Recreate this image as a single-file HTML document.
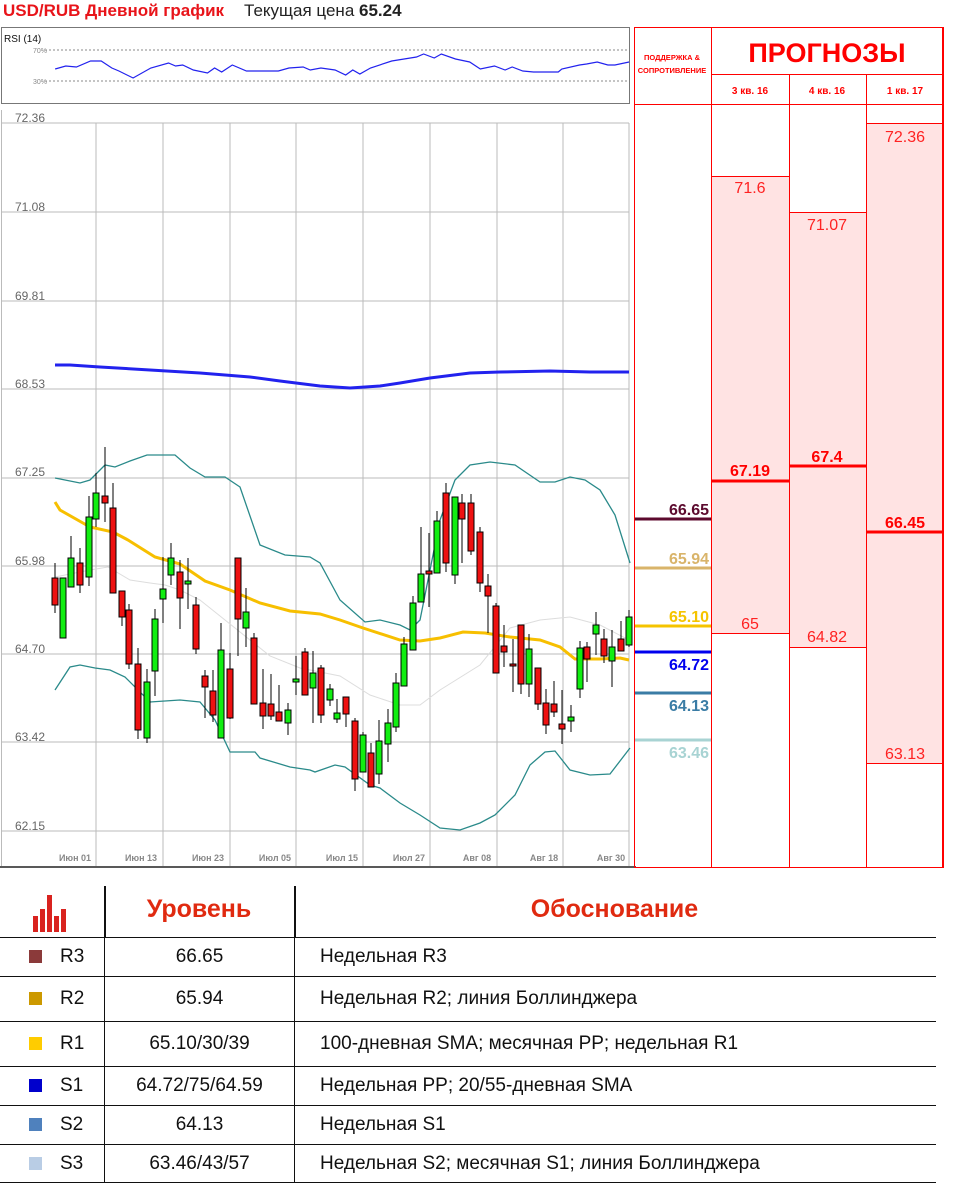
<!DOCTYPE html>
<html><head><meta charset="utf-8"><style>
body{margin:0;width:953px;height:1181px;background:#fff;font-family:"Liberation Sans",sans-serif;position:relative;overflow:hidden}
.a{position:absolute}
table{position:absolute;left:0;top:886px;border-collapse:collapse;width:936px}
td{border-bottom:1.5px solid #111;font-size:19px;color:#111;padding:0}
td.c1{width:104px;border-right:1.5px solid #111}
td.c2{width:189px;text-align:center;border-right:1.5px solid #111}
td.c3{padding-left:25px}
.sq{display:inline-block;width:13px;height:13px;margin:0 18px 0 29px;vertical-align:-1px}
</style></head><body>
<div class="a" style="left:3px;top:1px;font-size:17px;white-space:nowrap"><b style="color:#e8141a">USD/RUB Дневной график</b><span style="margin-left:20px;color:#222">Текущая цена <b>65.24</b></span></div>
<svg class="a" style="left:0;top:0" width="953" height="870" id="s">
<rect x="1.5" y="27.5" width="628" height="76" fill="#fff" stroke="#777"/>
<text x="4" y="42" font-size="10" fill="#111">RSI (14)</text>
<line x1="45" y1="50" x2="629" y2="50" stroke="#888" stroke-dasharray="2,2"/>
<line x1="45" y1="81" x2="629" y2="81" stroke="#888" stroke-dasharray="2,2"/>
<text x="33" y="53" font-size="7" fill="#888">70%</text>
<text x="33" y="84" font-size="7" fill="#888">30%</text>
<polyline fill="none" stroke="#2222ee" stroke-width="1.2" points="15,69 18,66 21,67 25,61 28,61 31,68 33,71 37,78 42,68 47,63 49,66 51,65 54,70 58,73 60,68 62,72 65,65 69,71 78,71 81,68 85,67 87,70 90,68 94,70 97,75 99,70 101,74 104,68 110,61 117,57 119,54 122,58 124,54 128,59 132,62 135,69 139,66 142,70 144,67 147,71 150,72 157,72 158,69 163,65 165,64 168,62 171,65 173,65 177,62" transform="translate(2,0) scale(3.543,1)" vector-effect="non-scaling-stroke"/>
<g stroke="#bbb" stroke-width="1">
<line x1="1" y1="123" x2="629" y2="123"/><line x1="1" y1="212" x2="629" y2="212"/><line x1="1" y1="301" x2="629" y2="301"/><line x1="1" y1="389" x2="629" y2="389"/><line x1="1" y1="478" x2="629" y2="478"/><line x1="1" y1="566" x2="629" y2="566"/><line x1="1" y1="654" x2="629" y2="654"/><line x1="1" y1="742" x2="629" y2="742"/><line x1="1" y1="831" x2="629" y2="831"/>
<line x1="96" y1="123" x2="96" y2="866"/><line x1="163" y1="123" x2="163" y2="866"/><line x1="230" y1="123" x2="230" y2="866"/><line x1="296" y1="123" x2="296" y2="866"/><line x1="363" y1="123" x2="363" y2="866"/><line x1="430" y1="123" x2="430" y2="866"/><line x1="497" y1="123" x2="497" y2="866"/><line x1="563" y1="123" x2="563" y2="866"/><line x1="629" y1="123" x2="629" y2="866"/>
<line x1="1.5" y1="110" x2="1.5" y2="866"/>
</g>
<line x1="0" y1="867" x2="636" y2="867" stroke="#222" stroke-width="1.5"/>
<g font-size="12" fill="#666">
<text x="15" y="122">72.36</text><text x="15" y="211">71.08</text><text x="15" y="300">69.81</text><text x="15" y="388">68.53</text><text x="15" y="476">67.25</text><text x="15" y="565">65.98</text><text x="15" y="653">64.70</text><text x="15" y="741">63.42</text><text x="15" y="830">62.15</text>
</g>
<g font-size="9" fill="#888" font-weight="bold" text-anchor="middle">
<text x="75" y="861">Июн 01</text><text x="141" y="861">Июн 13</text><text x="208" y="861">Июн 23</text><text x="275" y="861">Июл 05</text><text x="342" y="861">Июл 15</text><text x="409" y="861">Июл 27</text><text x="477" y="861">Авг 08</text><text x="544" y="861">Авг 18</text><text x="611" y="861">Авг 30</text>
</g>
<polyline fill="none" stroke="#2222ee" stroke-width="3" points="55,365 70,365 100,367 150,370 200,373 250,377 280,381 320,386 350,388 380,386 400,383 430,378 470,373 500,372 550,371 590,372 629,372"/>
<polyline fill="none" stroke="#ddd" stroke-width="1" points="55,577 90,570 108,567 130,580 150,583 165,585 180,590 200,600 225,620 250,640 270,656 300,668 340,676 370,695 400,705 420,705 440,690 480,665 510,628 540,620 570,617 600,625 629,640"/>
<polyline fill="none" stroke="#2a8a8a" stroke-width="1.3" points="55,478 80,483 90,480 105,465 115,467 130,461 147,455 175,455 190,468 205,477 225,477 240,487 260,545 285,555 310,557 320,563 340,600 365,622 380,620 400,625 410,630 420,620 440,520 455,480 470,465 490,462 515,465 540,482 555,482 570,477 585,480 600,490 615,515 630,563"/>
<polyline fill="none" stroke="#2a8a8a" stroke-width="1.3" points="55,690 70,667 80,665 95,668 110,670 125,677 150,702 180,700 200,702 215,720 230,752 255,752 260,758 290,767 310,770 315,772 335,765 345,767 370,785 380,788 400,803 420,815 440,828 460,830 480,823 495,815 515,795 530,765 545,752 555,751 570,770 590,775 610,774 630,748"/>
<polyline fill="none" stroke="#f7bf00" stroke-width="3" points="55,502 60,510 90,527 113,532 128,540 155,557 180,564 205,581 230,590 260,603 290,611 320,614 340,620 363,628 400,640 420,641 440,638 463,632 485,633 510,637 540,640 560,647 575,659 600,659 620,658 629,660"/>
<g id="cd" stroke="#000" stroke-width="1"></g>
<rect x="711" y="176" width="78" height="457" fill="#ffe3e3"/>
<rect x="789" y="212" width="77" height="435" fill="#ffe3e3"/>
<rect x="866" y="123" width="78" height="640" fill="#ffe3e3"/>
<g stroke="#f00" stroke-width="1" fill="none">
<rect x="634.5" y="27.5" width="309" height="840"/>
<line x1="711.5" y1="27" x2="711.5" y2="868"/><line x1="789.5" y1="74" x2="789.5" y2="868"/><line x1="866.5" y1="74" x2="866.5" y2="868"/>
<line x1="711" y1="74.5" x2="944" y2="74.5"/><line x1="634" y1="104.5" x2="944" y2="104.5"/>
<line x1="711" y1="176.5" x2="789" y2="176.5"/><line x1="711" y1="633.5" x2="789" y2="633.5"/>
<line x1="789" y1="212.5" x2="866" y2="212.5"/><line x1="789" y1="647.5" x2="866" y2="647.5"/>
<line x1="866" y1="123.5" x2="944" y2="123.5"/><line x1="866" y1="763.5" x2="944" y2="763.5"/>
</g>
<line x1="943" y1="27" x2="943" y2="868" stroke="#f00" stroke-width="2"/>
<g stroke="#f00" stroke-width="3"><line x1="711" y1="481" x2="789" y2="481"/><line x1="789" y1="466" x2="866" y2="466"/><line x1="866" y1="532" x2="944" y2="532"/></g>
<g fill="#f00" font-weight="bold" text-anchor="middle">
<text x="827" y="62" font-size="27">ПРОГНОЗЫ</text>
<text x="750" y="94" font-size="10">3 кв. 16</text><text x="827" y="94" font-size="10">4 кв. 16</text><text x="905" y="94" font-size="10">1 кв. 17</text>
<text x="672" y="60" font-size="7.5">ПОДДЕРЖКА &amp;</text><text x="672" y="73" font-size="7.5">СОПРОТИВЛЕНИЕ</text>
<text x="750" y="476" font-size="16">67.19</text><text x="827" y="462" font-size="16">67.4</text><text x="905" y="528" font-size="16">66.45</text>
</g>
<g fill="#f22" font-size="16" text-anchor="middle">
<text x="905" y="142">72.36</text><text x="750" y="193">71.6</text><text x="827" y="230">71.07</text><text x="750" y="629">65</text><text x="827" y="642">64.82</text><text x="905" y="759">63.13</text>
</g>
<g stroke-width="3">
<line x1="635" y1="519" x2="711" y2="519" stroke="#5c0a2e"/><line x1="635" y1="568" x2="711" y2="568" stroke="#d9b46a"/><line x1="635" y1="626" x2="711" y2="626" stroke="#f5c400"/><line x1="635" y1="652" x2="711" y2="652" stroke="#0000ee"/><line x1="635" y1="693" x2="711" y2="693" stroke="#3a7ca5"/><line x1="635" y1="740" x2="711" y2="740" stroke="#a8d3d3"/>
</g>
<g font-size="16" font-weight="bold" text-anchor="end">
<text x="709" y="515" fill="#5c0a2e">66.65</text><text x="709" y="564" fill="#d9b46a">65.94</text><text x="709" y="622" fill="#f5c400">65.10</text><text x="709" y="670" fill="#0000ee">64.72</text><text x="709" y="711" fill="#3a7ca5">64.13</text><text x="709" y="758" fill="#a8d3d3">63.46</text>
</g>
</svg>
<svg class="a" style="left:30px;top:895px" width="40" height="40"><g fill="#d9231f"><rect x="3" y="21" width="5" height="16"/><rect x="10" y="14" width="5" height="23"/><rect x="17" y="0" width="5" height="37"/><rect x="24" y="21" width="5" height="16"/><rect x="31" y="14" width="5" height="23"/></g></svg>
<div class="a" style="left:104px;top:886px;width:1.5px;height:52px;background:#111"></div>
<div class="a" style="left:294px;top:886px;width:1.5px;height:52px;background:#111"></div>
<div class="a" style="left:104px;width:190px;top:895px;text-align:center;font-size:25px;font-weight:900;color:#e02a10">Уровень</div>
<div class="a" style="left:294px;width:641px;top:895px;text-align:center;font-size:25px;font-weight:900;color:#e02a10">Обоснование</div>
<table style="top:937px">
<tr style="height:39px;border-top:1.5px solid #111"><td class="c1"><span class="sq" style="background:#8b3a3a"></span>R3</td><td class="c2">66.65</td><td class="c3">Недельная R3</td></tr>
<tr style="height:45px"><td class="c1"><span class="sq" style="background:#cc9900"></span>R2</td><td class="c2">65.94</td><td class="c3">Недельная R2; линия Боллинджера</td></tr>
<tr style="height:45px"><td class="c1"><span class="sq" style="background:#ffcc00"></span>R1</td><td class="c2">65.10/30/39</td><td class="c3">100-дневная SMA; месячная PP; недельная R1</td></tr>
<tr style="height:39px"><td class="c1"><span class="sq" style="background:#0000cc"></span>S1</td><td class="c2">64.72/75/64.59</td><td class="c3">Недельная PP; 20/55-дневная SMA</td></tr>
<tr style="height:39px"><td class="c1"><span class="sq" style="background:#4f81bd"></span>S2</td><td class="c2">64.13</td><td class="c3">Недельная S1</td></tr>
<tr style="height:38px"><td class="c1"><span class="sq" style="background:#b9cde5"></span>S3</td><td class="c2">63.46/43/57</td><td class="c3">Недельная S2; месячная S1; линия Боллинджера</td></tr>
</table>
<script>
var d=[[55,578,605,563,613,0],[63,578,638,578,638,1],[71,558,587,536,587,1],[80,563,585,548,593,0],[89,517,577,496,586,1],[96,493,519,473,527,1],[105,496,503,447,522,0],[113,508,593,483,593,0],[122,591,617,591,626,0],[129,610,664,604,669,0],[138,664,730,648,739,0],[147,682,738,669,743,1],[155,619,671,609,696,1],[163,589,599,557,623,1],[171,558,575,543,585,1],[180,572,598,560,629,0],[188,581,584,558,609,1],[196,605,649,597,654,0],[205,676,687,670,718,0],[213,691,715,670,722,0],[221,650,738,623,738,1],[230,669,718,653,719,0],[238,558,619,558,656,0],[246,612,628,588,647,1],[254,638,704,633,704,0],[263,703,716,669,729,0],[271,704,716,674,720,0],[279,712,721,685,721,0],[288,710,723,703,735,1],[296,679,682,656,695,1],[305,652,695,648,695,0],[313,673,688,651,723,1],[321,668,715,665,723,0],[330,689,700,684,706,1],[337,713,719,699,723,1],[346,697,714,697,727,0],[355,721,779,718,791,0],[363,735,772,732,772,1],[371,753,787,743,787,0],[379,741,774,720,784,1],[388,723,744,709,762,1],[396,683,727,673,732,1],[404,644,686,637,686,1],[413,603,650,596,650,1],[421,574,602,527,602,1],[429,571,574,533,607,0],[437,521,573,511,573,1],[446,493,563,483,572,0],[455,497,575,497,584,1],[462,503,519,494,563,0],[471,503,551,494,555,0],[480,532,583,527,592,0],[488,586,596,574,633,0],[496,606,673,603,673,0],[504,646,652,625,667,0],[513,664,666,639,692,0],[521,625,684,625,694,0],[529,649,684,634,697,1],[538,668,704,668,710,0],[546,703,725,689,734,0],[554,704,712,681,717,0],[562,724,729,690,744,0],[571,717,721,705,732,1],[580,648,689,641,698,1],[587,647,659,642,682,0],[596,625,634,612,655,1],[604,639,656,629,663,0],[612,647,661,630,687,1],[621,639,651,621,651,0],[629,617,645,610,647,1]];
var h='';d.forEach(function(c){h+='<line x1="'+c[0]+'" y1="'+c[3]+'" x2="'+c[0]+'" y2="'+c[4]+'"/><rect x="'+(c[0]-3)+'" y="'+c[1]+'" width="6" height="'+Math.max(2,c[2]-c[1])+'" fill="'+(c[5]?'#11ee11':'#ee1111')+'"/>';});
document.getElementById('cd').innerHTML=h;
</script>
</body></html>
